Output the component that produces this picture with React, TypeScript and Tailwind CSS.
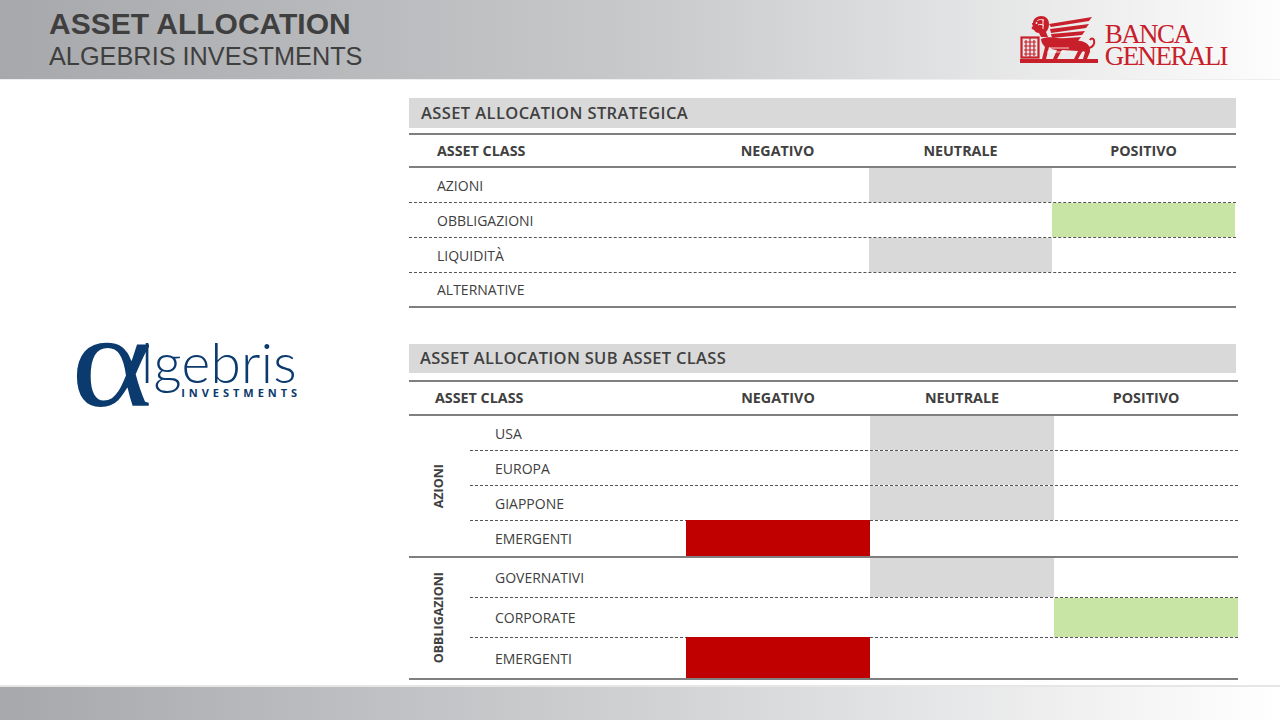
import React from "react";

type Mark = "neg" | "neu" | "pos" | "";

const cellColor = (mark: Mark) => {
  if (mark === "neg") return "bg-[#c00000] shadow-[0_-1px_0_#c00000]";
  if (mark === "neu") return "bg-[#d9d9d9]";
  if (mark === "pos") return "bg-[#c8e5a6]";
  return "";
};

const strategic: { label: string; mark: Mark }[] = [
  { label: "AZIONI", mark: "neu" },
  { label: "OBBLIGAZIONI", mark: "pos" },
  { label: "LIQUIDITÀ", mark: "neu" },
  { label: "ALTERNATIVE", mark: "" },
];

const groups: { name: string; rowH: string; rows: { label: string; mark: Mark }[] }[] = [
  {
    name: "AZIONI",
    rowH: "h-[35px]",
    rows: [
      { label: "USA", mark: "neu" },
      { label: "EUROPA", mark: "neu" },
      { label: "GIAPPONE", mark: "neu" },
      { label: "EMERGENTI", mark: "neg" },
    ],
  },
  {
    name: "OBBLIGAZIONI",
    rowH: "h-[40px]",
    rows: [
      { label: "GOVERNATIVI", mark: "neu" },
      { label: "CORPORATE", mark: "pos" },
      { label: "EMERGENTI", mark: "neg" },
    ],
  },
];

const BancaLion = () => (
  <svg width="80" height="50" viewBox="0 0 80 50" fill="none">
    {/* base */}
    <rect x="1" y="44" width="78" height="4" fill="#c8202a" />
    {/* book */}
    <rect x="2.5" y="22.5" width="17" height="20" stroke="#c8202a" strokeWidth="2.2" />
    <path d="M11 23v19M5 27h12M5 31h12M5 35h12M5 39h12M7 25v16M15 25v16" stroke="#c8202a" strokeWidth="1.2" />
    {/* head + mane */}
    <path
      d="M14 8c0-4 4-7 8-7 5 0 8 3 8 8 0 3-1 6-3 8l2 5h-7l-2-4c-2 0-4-1-5-3l-2-1c-1-1 0-2 1-3l-1-2c0-1 0-1 1-1z"
      fill="#c8202a"
    />
    <path d="M18 6c2-2 5-2 7 0M19 10c2-1 4-1 6 1M24 4v10" stroke="#fff" strokeWidth="0.9" />
    <circle cx="17.5" cy="8" r="0.9" fill="#fff" />
    {/* wings */}
    <path d="M30 9L73 2l-3 4-38 6z" fill="#c8202a" />
    <path d="M31 14l39-5-3 4-35 5z" fill="#c8202a" />
    <path d="M32 19l34-3-3 4-30 3z" fill="#c8202a" />
    <path d="M33 24l29-2-3 4-25 2z" fill="#c8202a" />
    {/* body */}
    <path
      d="M22 24c4-2 10-2 16-1l24 3c5 1 9 4 9 9v2l-3 7h-4l2-7c-1-1-2-1-3 0l-4 7h-4l4-8-16-1-5 9h-4l4-9c-3 0-6-1-8-3l-3 12h-4l3-12c-2-2-4-5-4-8z"
      fill="#c8202a"
    />
    <path d="M30 33h20M28 37h18" stroke="#fff" strokeWidth="0.8" />
    {/* tail */}
    <path d="M70 33c4-1 6-4 5-8-1-2-3-2-4 0" stroke="#c8202a" strokeWidth="2" />
  </svg>
);

const AlgebrisLogo = () => (
  <div className="flex items-start text-[#0b3a6e]">
    <span className="inline-block origin-left scale-x-[1.16] -mt-[13px] font-['Liberation_Serif',serif] text-[134px] leading-[68px] h-[68px] w-[70px]">
      α
    </span>
    <div className="flex flex-col items-end">
      <span className="font-['Lato',sans-serif] font-light text-[55px] leading-[44px] tracking-[0.3px]">
        lgebris
      </span>
      <span className="mt-[3px] font-['Open_Sans',sans-serif] font-bold text-[11px] leading-[12px] tracking-[0.36em] -mr-[4px]">
        INVESTMENTS
      </span>
    </div>
  </div>
);

const StrategicTable = () => (
  <div className="w-[827px]">
    <div className="h-[30px] bg-[#d9d9d9] pl-[12px] flex items-center text-[16.5px] font-semibold text-[#404040] tracking-[0.4px]">
      ASSET ALLOCATION STRATEGICA
    </div>
    <div className="mt-[5px] h-[35px] border-t-2 border-b-2 border-[#7f7f7f] grid grid-cols-[277px_183px_183px_183px] items-center text-[14.3px] font-bold text-[#404040]">
      <div className="pl-[28px]">ASSET CLASS</div>
      <div className="text-center">NEGATIVO</div>
      <div className="text-center">NEUTRALE</div>
      <div className="text-center">POSITIVO</div>
    </div>
    {strategic.map((r, i) => (
      <div
        key={r.label}
        className={`h-[35px] grid grid-cols-[277px_183px_183px_183px] text-[14px] text-[#404040] ${
          i === strategic.length - 1
            ? "border-b-2 border-solid border-[#7f7f7f]"
            : "border-b border-dashed border-[#555555]"
        }`}
      >
        <div className="pl-[28px] flex items-center">{r.label}</div>
        <div className={cellColor(r.mark === "neg" ? "neg" : "")} />
        <div className={cellColor(r.mark === "neu" ? "neu" : "")} />
        <div className={cellColor(r.mark === "pos" ? "pos" : "")} />
      </div>
    ))}
  </div>
);

const SubTable = () => (
  <div className="w-[829px]">
    <div className="h-[29px] w-[827px] bg-[#d9d9d9] pl-[11px] flex items-center text-[16.5px] font-semibold text-[#404040] tracking-[0.3px]">
      ASSET ALLOCATION SUB ASSET CLASS
    </div>
    <div className="mt-[7px] h-[36px] border-t-2 border-b-2 border-[#7f7f7f] grid grid-cols-[277px_184px_184px_184px] items-center text-[14.3px] font-bold text-[#404040]">
      <div className="pl-[26px]">ASSET CLASS</div>
      <div className="text-center">NEGATIVO</div>
      <div className="text-center">NEUTRALE</div>
      <div className="text-center">POSITIVO</div>
    </div>
    {groups.map((g) => (
      <div key={g.name} className="flex border-b-2 border-[#7f7f7f]">
        <div className="w-[61px] flex items-center justify-center">
          <span className="[writing-mode:vertical-rl] rotate-180 text-[12.5px] font-bold text-[#404040]">
            {g.name}
          </span>
        </div>
        <div className="flex-1">
          {g.rows.map((r, i) => (
            <div
              key={r.label + i}
              className={`${g.rowH} grid grid-cols-[216px_184px_184px_184px] text-[14px] text-[#404040] ${
                i === g.rows.length - 1 ? "" : "border-b border-dashed border-[#555555]"
              }`}
            >
              <div className="pl-[25px] flex items-center">{r.label}</div>
              <div className={cellColor(r.mark === "neg" ? "neg" : "")} />
              <div className={cellColor(r.mark === "neu" ? "neu" : "")} />
              <div className={cellColor(r.mark === "pos" ? "pos" : "")} />
            </div>
          ))}
        </div>
      </div>
    ))}
  </div>
);

export default function App() {
  return (
    <div className="w-[1280px] h-[720px] bg-white flex flex-col overflow-hidden font-['Open_Sans',sans-serif]">
      {/* header */}
      <div className="h-[80px] shrink-0 bg-linear-to-r from-[#a7a8ab] via-[#c8c9cb] to-[#fdfdfd] flex justify-between border-b border-[#eeeeee]">
        <div className="pl-[49px] pt-[9px] font-['Liberation_Sans',Arial,sans-serif] text-[#3f3f3f]">
          <div className="text-[30px] leading-[30px] font-bold">ASSET ALLOCATION</div>
          <div className="mt-[5px] text-[25.3px] leading-[25px]">ALGEBRIS INVESTMENTS</div>
        </div>
        <div className="flex items-start pt-[15px] pr-[53px] gap-[6px]">
          <BancaLion />
          <div className="font-['Liberation_Serif',serif] text-[#c8202a] text-[27px] leading-[22px] tracking-[-1.6px] pt-[8px]">
            <div>BANCA</div>
            <div>GENERALI</div>
          </div>
        </div>
      </div>

      {/* main */}
      <div className="h-[605px] shrink-0 flex">
        <div className="w-[409px] shrink-0 pl-[71px] pt-[260px]">
          <AlgebrisLogo />
        </div>
        <div className="pt-[18px] flex flex-col">
          <StrategicTable />
          <div className="mt-[36px]">
            <SubTable />
          </div>
        </div>
      </div>

      {/* footer */}
      <div className="flex-1 border-t-2 border-[#e6e6e6] bg-linear-to-r from-[#a7a8ab] via-[#d0d1d3] to-[#ffffff]" />
    </div>
  );
}
